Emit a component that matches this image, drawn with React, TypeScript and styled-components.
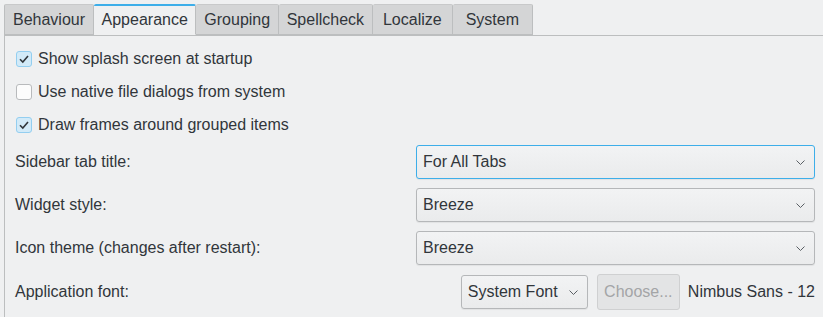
import styled, { createGlobalStyle } from "styled-components"

const Global = createGlobalStyle`
  html, body {
    margin: 0;
    padding: 0;
    background: #eff0f1;
    font-family: "Liberation Sans", Arial, sans-serif;
    color: #31363b;
  }
`

const Page = styled.div`
  width: 823px;
  height: 317px;
  padding: 4px 0 0 4px;
  box-sizing: border-box;
  display: flex;
  flex-direction: column;
  overflow: hidden;
`

const TabBar = styled.div`
  display: flex;
  height: 31px;
  border-bottom: 1px solid #bcbebf;
`

const Tab = styled.div<{ $active?: boolean }>`
  height: 31px;
  min-width: 80px;
  box-sizing: border-box;
  padding: 0 7.5px 0 8px;
  display: flex;
  align-items: center;
  justify-content: center;
  font-size: 16px;
  background: ${(p) => (p.$active ? "#eff0f1" : "#d4d5d6")};
  border-right: 1px solid #bcbebf;
  border-top: ${(p) => (p.$active ? "2px solid #3daee9" : "1px solid #c8c9ca")};
  border-bottom: 1px solid ${(p) => (p.$active ? "#eff0f1" : "#bcbebf")};
  margin-bottom: -1px;
  border-radius: 2px 2px 0 0;
  &:first-child {
    border-left: 1px solid #bcbebf;
  }
`

const Panel = styled.div`
  flex: 1;
  border-left: 1px solid #bcbebf;
  padding: 6px 8px 0 10px;
  display: flex;
  flex-direction: column;
`

const CheckRow = styled.label`
  display: flex;
  align-items: center;
  height: 33px;
  font-size: 16px;
  gap: 6px;
  margin-left: 1px;
`

const Box = styled.span<{ $checked?: boolean }>`
  width: 16px;
  height: 16px;
  box-sizing: border-box;
  border-radius: 3px;
  border: 1px solid ${(p) => (p.$checked ? "#93cef0" : "#b8babc")};
  background: ${(p) => (p.$checked ? "#d2eaf8" : "#fcfcfc")};
  display: flex;
  align-items: center;
  justify-content: center;
`

const FormGrid = styled.div`
  display: grid;
  grid-template-columns: 1fr 399px;
  row-gap: 9px;
  margin-top: 4px;
`

const Label = styled.div`
  font-size: 16px;
  display: flex;
  align-items: center;
`

const Combo = styled.div<{ $focus?: boolean; $width?: number }>`
  height: 34px;
  box-sizing: border-box;
  ${(p) => (p.$width ? `width: ${p.$width}px;` : "")}
  border: 1px solid ${(p) => (p.$focus ? "#3daee9" : "#b5b7b9")};
  border-radius: 3px;
  background: linear-gradient(#f2f3f4, #eaebec);
  display: flex;
  align-items: center;
  justify-content: space-between;
  padding: 0 8px 0 6px;
  font-size: 16px;
  box-shadow: 0 1px 1px rgba(0, 0, 0, 0.06);
`

const FontRow = styled.div`
  display: flex;
  align-items: center;
  justify-content: flex-end;
`

const Button = styled.div`
  height: 36px;
  width: 83px;
  margin: 0 8px 0 9px;
  box-sizing: border-box;
  border: 1px solid #cfd0d1;
  border-radius: 3px;
  background: #e3e4e5;
  color: #a3a5a7;
  font-size: 16px;
  display: flex;
  align-items: center;
  justify-content: center;
`

const FontName = styled.span`
  font-size: 16px;
`

const Check = () => (
  <svg width="12" height="12" viewBox="0 0 12 12">
    <path d="M2 6.2 L4.8 9 L10 3" fill="none" stroke="#31363b" strokeWidth="1.6" />
  </svg>
)

const Chevron = () => (
  <svg width="11" height="7" viewBox="0 0 11 7">
    <path d="M1.5 1.5 L5.5 5.5 L9.5 1.5" fill="none" stroke="#5a5f64" strokeWidth="1" />
  </svg>
)

const tabs = ["Behaviour", "Appearance", "Grouping", "Spellcheck", "Localize", "System"]

const checks = [
  { text: "Show splash screen at startup", checked: true },
  { text: "Use native file dialogs from system", checked: false },
  { text: "Draw frames around grouped items", checked: true },
]

export default function App() {
  return (
    <>
      <Global />
      <Page>
        <TabBar>
          {tabs.map((t) => (
            <Tab key={t} $active={t === "Appearance"}>
              {t}
            </Tab>
          ))}
        </TabBar>
        <Panel>
          {checks.map((c) => (
            <CheckRow key={c.text}>
              <Box $checked={c.checked}>{c.checked && <Check />}</Box>
              {c.text}
            </CheckRow>
          ))}
          <FormGrid>
            <Label>Sidebar tab title:</Label>
            <Combo $focus>
              For All Tabs <Chevron />
            </Combo>
            <Label>Widget style:</Label>
            <Combo>
              Breeze <Chevron />
            </Combo>
            <Label>Icon theme (changes after restart):</Label>
            <Combo>
              Breeze <Chevron />
            </Combo>
            <Label>Application font:</Label>
            <FontRow>
              <Combo $width={127}>
                System Font <Chevron />
              </Combo>
              <Button>Choose...</Button>
              <FontName>Nimbus Sans - 12</FontName>
            </FontRow>
          </FormGrid>
        </Panel>
      </Page>
    </>
  )
}
